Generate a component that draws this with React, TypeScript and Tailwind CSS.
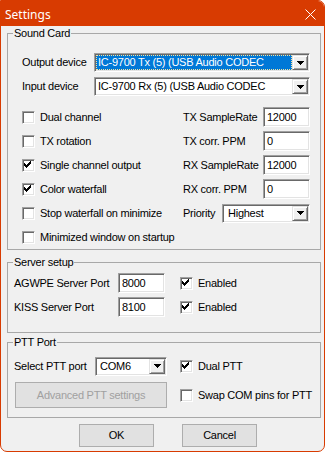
import type { ReactNode } from 'react'

// classic 3D sunken edge: outer 1px border + inner 1px ring
const sunken =
  'border border-t-[#a0a0a0] border-l-[#a0a0a0] border-b-white border-r-white shadow-[inset_1px_1px_0_#696969,inset_-1px_-1px_0_#e3e3e3] p-px'

const raised =
  'border border-t-[#e3e3e3] border-l-[#e3e3e3] border-b-[#696969] border-r-[#696969] shadow-[inset_1px_1px_0_#fff,inset_-1px_-1px_0_#a0a0a0]'

function Check({ checked }: { checked?: boolean }) {
  return (
    <span className={`block size-[13px] shrink-0 bg-white ${sunken} !p-0`}>
      {checked && (
        <svg width="11" height="11" viewBox="0 0 11 11" shapeRendering="crispEdges" className="block">
          <g fill="#000">
            <rect x="7" y="1" width="1" height="1" />
            <rect x="6" y="2" width="2" height="1" />
            <rect x="1" y="3" width="1" height="1" />
            <rect x="5" y="3" width="3" height="1" />
            <rect x="1" y="4" width="2" height="1" />
            <rect x="4" y="4" width="3" height="1" />
            <rect x="1" y="5" width="5" height="1" />
            <rect x="2" y="6" width="3" height="1" />
            <rect x="3" y="7" width="1" height="1" />
          </g>
        </svg>
      )}
    </span>
  )
}

function CheckRow({ label, checked }: { label: string; checked?: boolean }) {
  return (
    <div className="flex h-[24px] items-center gap-[5px]">
      <Check checked={checked} />
      <span className="whitespace-nowrap">{label}</span>
    </div>
  )
}

function DropButton() {
  return (
    <span className={`flex h-full w-[16px] shrink-0 items-center justify-center bg-[#f0f0f0] ${raised}`}>
      <svg width="7" height="4" viewBox="0 0 7 4" shapeRendering="crispEdges">
        <path d="M0 0H7L3.5 4Z" fill="#000" />
      </svg>
    </span>
  )
}

function Combo({ value, focused, className = '' }: { value: string; focused?: boolean; className?: string }) {
  return (
    <div className={`flex h-[19px] shrink-0 bg-white ${sunken} ${className}`}>
      <div
        className={[
          'flex min-w-0 flex-1 items-center overflow-hidden whitespace-nowrap pl-[1px]',
          focused ? 'border border-dotted border-[#f3e3a0] bg-[#0078d7] text-white' : 'border border-transparent',
        ].join(' ')}
      >
        {value}
      </div>
      <DropButton />
    </div>
  )
}

function TextBox({ value, className = '' }: { value: string; className?: string }) {
  return (
    <div className={`flex h-[20px] shrink-0 items-center bg-white pl-[2px] ${sunken} ${className}`}>
      <span className="pl-px">{value}</span>
    </div>
  )
}

function Group({ title, className = '', children }: { title: string; className?: string; children: ReactNode }) {
  return (
    <fieldset className={`border border-[#a8a8a8] ${className}`}>
      <legend className="ml-[5px] px-px leading-[13px]">{title}</legend>
      {children}
    </fieldset>
  )
}

function Button({ children, disabled, className = '' }: { children: ReactNode; disabled?: boolean; className?: string }) {
  return (
    <button
      type="button"
      className={[
        'flex items-center justify-center border border-[#adadad] bg-[#e1e1e1]',
        disabled ? 'text-[#a0a0a0]' : 'text-black',
        className,
      ].join(' ')}
    >
      {children}
    </button>
  )
}

export default function App() {
  return (
    <div className="min-h-screen bg-white font-['Liberation_Sans',Arial,sans-serif] text-[11px] leading-[13px] tracking-[-0.25px] text-black">
      <div className="flex h-[452px] w-[325px] flex-col overflow-hidden rounded-tr-[7px] rounded-b-[7px] border border-[#d83b01] bg-[#f0f0f0]">
        {/* title bar */}
        <div className="flex h-[25px] shrink-0 items-center justify-between bg-[#d83b01] pl-[4px] pr-[8px] font-['Noto_Sans',sans-serif] text-[12px] tracking-normal text-white">
          <span className="pt-[2px]">Settings</span>
          <svg width="11" height="11" viewBox="0 0 11 11" className="mt-[1px]">
            <path d="M0.5 0.5L10.5 10.5M10.5 0.5L0.5 10.5" stroke="#fff" strokeWidth="1" />
          </svg>
        </div>

        <div className="flex flex-col pl-[6px] pr-[3px] pt-px">
          <Group title="Sound Card">
            <div className="pl-[14px] pr-[10px]">
              <div className="mt-[13px] flex h-[19px] items-center">
                <span className="w-[72px]">Output device</span>
                <Combo focused value="IC-9700 Tx (5) (USB Audio CODEC" className="w-[216px]" />
              </div>
              <div className="mt-[5px] flex h-[19px] items-center">
                <span className="w-[72px]">Input device</span>
                <Combo value="IC-9700 Rx (5) (USB Audio CODEC" className="w-[216px]" />
              </div>

              <div className="mt-[9px] flex">
                <div className="flex w-[161px] flex-col">
                  <CheckRow label="Dual channel" />
                  <CheckRow label="TX rotation" />
                  <CheckRow label="Single channel output" checked />
                  <CheckRow label="Color waterfall" checked />
                  <CheckRow label="Stop waterfall on minimize" />
                  <CheckRow label="Minimized window on startup" />
                </div>
                <div className="flex w-[127px] flex-col">
                  <div className="flex h-[24px] items-center">
                    <span className="w-[80px]">TX SampleRate</span>
                    <TextBox value="12000" className="w-[47px]" />
                  </div>
                  <div className="flex h-[24px] items-center">
                    <span className="w-[80px]">TX corr. PPM</span>
                    <TextBox value="0" className="w-[47px]" />
                  </div>
                  <div className="flex h-[24px] items-center">
                    <span className="w-[80px]">RX SampleRate</span>
                    <TextBox value="12000" className="w-[47px]" />
                  </div>
                  <div className="flex h-[24px] items-center">
                    <span className="w-[80px]">RX corr. PPM</span>
                    <TextBox value="0" className="w-[47px]" />
                  </div>
                  <div className="flex h-[24px] items-center">
                    <span className="w-[39px]">Priority</span>
                    <Combo value="Highest" className="w-[88px] pl-[3px]" />
                  </div>
                </div>
              </div>
            </div>
          </Group>

          <Group title="Server setup" className="mt-[6px]">
            <div className="pb-[13px] pl-[6px] pt-[2px]">
              <div className="flex h-[24px] items-center">
                <span className="w-[104px]">AGWPE Server Port</span>
                <TextBox value="8000" className="w-[47px]" />
                <span className="ml-[15px]">
                  <Check checked />
                </span>
                <span className="ml-[5px]">Enabled</span>
              </div>
              <div className="flex h-[24px] items-center">
                <span className="w-[104px]">KISS Server Port</span>
                <TextBox value="8100" className="w-[47px]" />
                <span className="ml-[15px]">
                  <Check checked />
                </span>
                <span className="ml-[5px]">Enabled</span>
              </div>
            </div>
          </Group>

          <Group title="PTT Port" className="mt-[3px]">
            <div className="grid grid-cols-[166px_1fr] grid-rows-[24px_26px] gap-y-[4px] pb-[9px] pl-[6px] pt-[5px]">
              <div className="flex items-center">
                <span className="w-[81px]">Select PTT port</span>
                <Combo value="COM6" className="w-[72px] pl-[2px]" />
              </div>
              <CheckRow label="Dual PTT" checked />
              <Button disabled className="ml-[1px] h-[26px] w-[152px]">
                Advanced PTT settings
              </Button>
              <div className="flex items-center gap-[5px]">
                <Check />
                <span className="whitespace-nowrap">Swap COM pins for PTT</span>
              </div>
            </div>
          </Group>

          <div className="mt-[6px] flex">
            <Button className="ml-[72px] h-[23px] w-[75px]">OK</Button>
            <Button className="ml-[28px] h-[23px] w-[75px]">Cancel</Button>
          </div>
        </div>
      </div>
    </div>
  )
}
